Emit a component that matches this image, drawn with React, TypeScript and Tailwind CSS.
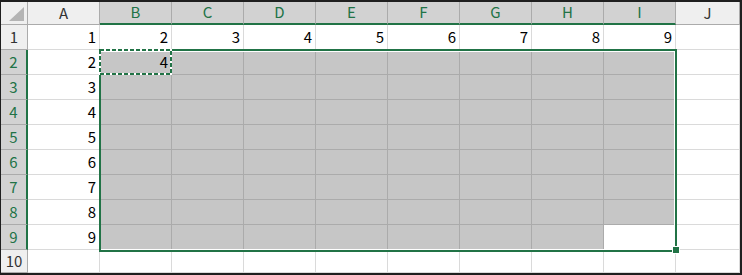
import React from "react";

const cols = ["A", "B", "C", "D", "E", "F", "G", "H", "I", "J"];
const rows = [1, 2, 3, 4, 5, 6, 7, 8, 9, 10];

// B2:I9 is selected, I9 is the active cell
const isSelCol = (c: number) => c >= 1 && c <= 8;
const isSelRow = (r: number) => r >= 2 && r <= 9;

const cellValue = (r: number, c: number): string => {
  if (r === 1 && c <= 8) return String(c + 1);
  if (c === 0 && r <= 9) return String(r);
  if (r === 2 && c === 1) return "4";
  return "";
};

const font = "font-['Noto_Sans_CJK_JP','Noto_Sans',sans-serif]";

const App: React.FC = () => {
  return (
    <div className="relative w-[742px] h-[275px] bg-[#1f1f1f] pt-[2px] pl-[1px] pr-[2px] pb-[2px] overflow-hidden">
      <div
        className={`grid grid-cols-[27px_repeat(9,72px)_1fr] grid-rows-[23px_repeat(9,25px)_23px] w-full h-full bg-white ${font}`}
      >
        {/* corner */}
        <div className="bg-[#efefef] border-r border-b border-[#ababab] flex items-end justify-end pr-[2px] pb-[2px]">
          <svg width="17" height="15" viewBox="0 0 17 15">
            <polygon points="16,0 16,14 1,14" fill="#b4b4b4" />
          </svg>
        </div>
        {cols.map((col, c) => (
          <div
            key={col}
            className={
              isSelCol(c)
                ? "bg-[#d2d2d2] text-[#217346] border-r border-r-[#ababab] border-b-2 border-b-[#217346] flex items-center justify-center text-[15px]"
                : "bg-[#efefef] text-[#333] border-r border-r-[#ababab] border-b border-b-[#ababab] flex items-center justify-center text-[15px]"
            }
          >
            {col}
          </div>
        ))}

        {rows.map((r) => (
          <React.Fragment key={r}>
            <div
              className={
                isSelRow(r)
                  ? "bg-[#d2d2d2] text-[#217346] border-r-2 border-r-[#217346] border-b border-b-[#ababab] flex items-center justify-center text-[15px]"
                  : "bg-[#efefef] text-[#333] border-r border-r-[#ababab] border-b border-b-[#ababab] flex items-center justify-center text-[15px]"
              }
            >
              {r}
            </div>
            {cols.map((col, c) => {
              const sel = isSelRow(r) && isSelCol(c);
              const active = r === 9 && c === 8;
              return (
                <div
                  key={col}
                  className={
                    sel && !active
                      ? "bg-[#c6c6c6] border-r border-b border-[#ababab] flex items-center justify-end pr-[3px] text-[15px] text-black"
                      : "bg-white border-r border-b border-[#dadada] flex items-center justify-end pr-[3px] text-[15px] text-black"
                  }
                >
                  {cellValue(r, c)}
                </div>
              );
            })}
          </React.Fragment>
        ))}
      </div>

      {/* selection border B2:I9 */}
      <div className="absolute left-[99px] top-[49px] w-[578px] h-[203px] border-2 border-[#217346]">
        <div className="absolute inset-0 border-t border-r border-b border-white" />
      </div>

      {/* copy marquee around B2 */}
      <svg
        className="absolute left-[99px] top-[49px]"
        width="73"
        height="26"
        viewBox="0 0 73 26"
      >
        <rect x="1" y="1" width="71" height="24" fill="none" stroke="#ffffff" strokeWidth="2" />
        <rect
          x="1"
          y="1"
          width="71"
          height="24"
          fill="none"
          stroke="#217346"
          strokeWidth="2"
          strokeDasharray="4 2"
        />
      </svg>

      {/* fill handle */}
      <div className="absolute left-[672px] top-[246px] w-[8px] h-[8px] bg-[#217346] border border-white" />
    </div>
  );
};

export default App;
